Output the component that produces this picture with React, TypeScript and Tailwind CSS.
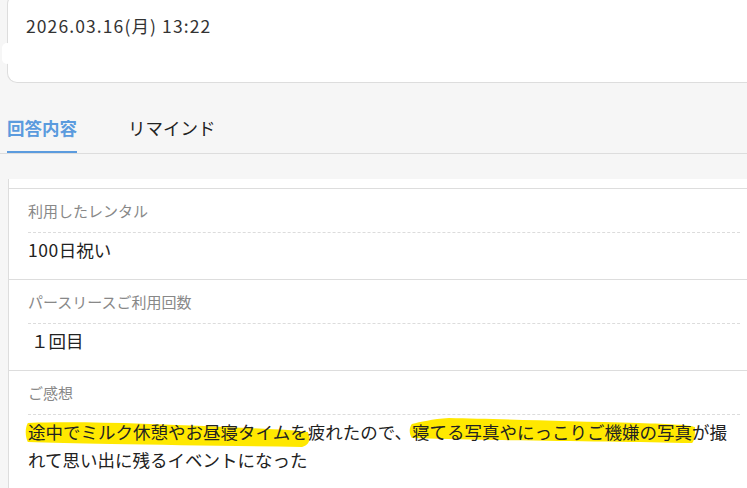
import React from "react";

function Marker({ children, d }: { children: React.ReactNode; d: string }) {
  return (
    <span className="relative inline-block">
      <svg
        className="absolute left-[-3px] top-0 h-[30px] w-[calc(100%+6px)] -z-10"
        viewBox="0 0 100 30"
        preserveAspectRatio="none"
      >
        <path d={d} fill="#ffe800" />
      </svg>
      {children}
    </span>
  );
}

const pathA =
  "M1,5 C20,3 45,6 70,9 C85,11 95,12 99,14 C100,20 100,26 97,29 C75,28 50,27 30,26 C18,25 8,25 1,24 C0,18 0,10 1,5 Z";
const pathB =
  "M1,6 C4,4 8,1 14,0 C30,1 55,3 80,5 C92,6 98,7 100,9 C100,16 100,22 99,25 C80,24 55,23 30,22 C18,21 8,21 1,20 C0,15 0,10 1,6 Z";

function Section({
  label,
  children,
  last,
}: {
  label: string;
  children: React.ReactNode;
  last?: boolean;
}) {
  return (
    <div className="border-b border-[#dddddd] pl-[19px] pr-[7px] pt-[11px]">
      <div className="border-b border-dashed border-[#dcdcdc] pb-[10px] text-[15px] leading-[22px] text-[#888888]">
        {label}
      </div>
      <div className={`pt-[3px] text-[17.5px] leading-[28px] text-[#222222] ${last ? "pb-[14px]" : "pb-[15px]"}`}>
        {children}
      </div>
    </div>
  );
}

export default function App() {
  return (
    <div className="relative min-h-[488px] w-full overflow-hidden bg-[#f6f6f6] font-['Noto_Sans_CJK_JP',sans-serif]">
      {/* top card */}
      <div className="relative -mt-[6px] ml-[7px] h-[89px] rounded-l-[10px] border border-r-0 border-[#dddddd] bg-white pl-[18px] pt-[17px]">
        <div className="text-[17.5px] leading-[28px] tracking-[1.1px] text-[#333333]">2026.03.16(月) 13:22</div>
      </div>
      <div className="absolute left-[2px] top-[43px] h-[21px] w-[10px] rounded-full bg-white" />

      {/* tabs */}
      <div className="mt-[31px] flex items-end border-b border-[#dddddd] pl-[7px]">
        <div className="border-b-2 border-[#5b9bde] pb-[9px] text-[17.5px] font-bold leading-[28px] text-[#5b9bde]">
          回答内容
        </div>
        <div className="ml-[51px] pb-[11px] text-[17.5px] leading-[28px] text-[#222222]">リマインド</div>
      </div>

      {/* content */}
      <div className="ml-[8px] mt-[25px] border-l border-[#dddddd] bg-white">
        <div className="h-[10px] border-b border-[#dddddd]" />
        <Section label="利用したレンタル">
          <span className="tracking-[0.5px]">100</span>日祝い
        </Section>
        <Section label="パースリースご利用回数">
          <span className="pl-[3px]">１回目</span>
        </Section>
        <Section label="ご感想" last>
          <p className="isolate">
            <Marker d={pathA}>途中でミルク休憩やお昼寝タイムを</Marker>疲れたので、
            <Marker d={pathB}>寝てる写真やにっこりご機嫌の写真</Marker>が撮れて思い出に残るイベントになった
          </p>
        </Section>
      </div>
    </div>
  );
}
